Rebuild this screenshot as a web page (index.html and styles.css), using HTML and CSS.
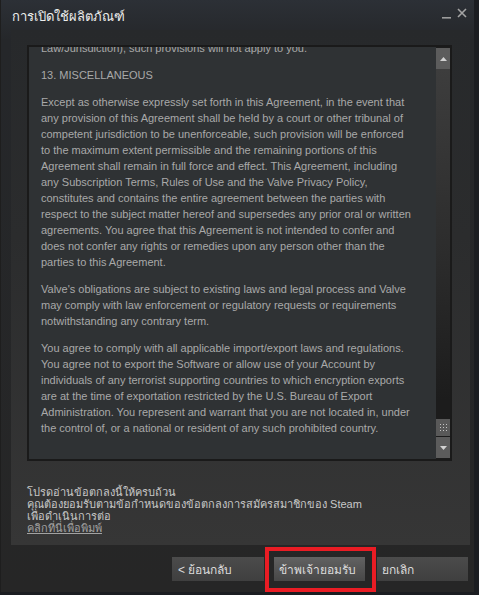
FILE: index.html
```html
<!DOCTYPE html>
<html lang="th">
<head>
  <meta charset="UTF-8">
  <meta name="viewport" content="width=device-width, initial-scale=1.0">
  <title>การเปิดใช้ผลิตภัณฑ์</title>
  <link rel="stylesheet" href="styles.css">
</head>
<body>
  <div class="window">
    <div class="titlebar">
      <span class="title">การเปิดใช้ผลิตภัณฑ์</span>
      <div class="window-controls">
        <svg class="minimize" width="9" height="3" viewBox="0 0 9 3"><rect x="0" y="1" width="9" height="1.6" fill="#9c9c9c"/></svg>
        <svg class="close" width="10" height="10" viewBox="0 0 10 10"><path d="M1 1 L9 9 M9 1 L1 9" stroke="#a4a4a4" stroke-width="1.6"/></svg>
      </div>
    </div>

    <div class="panel">
      <!-- Agreement text box -->
      <div class="agreement">
        <div class="agreement-text">
          <p class="scrolled">Law/Jurisdiction), such provisions will not apply to you.</p>
          <p>13. MISCELLANEOUS</p>
          <p>Except as otherwise expressly set forth in this Agreement, in the event that<br>
            any provision of this Agreement shall be held by a court or other tribunal of<br>
            competent jurisdiction to be unenforceable, such provision will be enforced<br>
            to the maximum extent permissible and the remaining portions of this<br>
            Agreement shall remain in full force and effect. This Agreement, including<br>
            any Subscription Terms, Rules of Use and the Valve Privacy Policy,<br>
            constitutes and contains the entire agreement between the parties with<br>
            respect to the subject matter hereof and supersedes any prior oral or written<br>
            agreements. You agree that this Agreement is not intended to confer and<br>
            does not confer any rights or remedies upon any person other than the<br>
            parties to this Agreement.</p>
          <p>Valve's obligations are subject to existing laws and legal process and Valve<br>
            may comply with law enforcement or regulatory requests or requirements<br>
            notwithstanding any contrary term.</p>
          <p>You agree to comply with all applicable import/export laws and regulations.<br>
            You agree not to export the Software or allow use of your Account by<br>
            individuals of any terrorist supporting countries to which encryption exports<br>
            are at the time of exportation restricted by the U.S. Bureau of Export<br>
            Administration. You represent and warrant that you are not located in, under<br>
            the control of, or a national or resident of any such prohibited country.</p>
        </div>
        <div class="scrollbar">
          <div class="scroll-btn">
            <svg width="7" height="4" viewBox="0 0 7 4"><path d="M0 4 L3.5 0 L7 4 Z" fill="#d2d2d2"/></svg>
          </div>
          <div class="scroll-track">
            <div class="scroll-thumb">
              <svg width="7" height="7" viewBox="0 0 7 7" fill="#c4c4c4">
                <rect x="0" y="0" width="1" height="1"/><rect x="3" y="0" width="1" height="1"/><rect x="6" y="0" width="1" height="1"/>
                <rect x="0" y="3" width="1" height="1"/><rect x="3" y="3" width="1" height="1"/><rect x="6" y="3" width="1" height="1"/>
                <rect x="0" y="6" width="1" height="1"/><rect x="3" y="6" width="1" height="1"/><rect x="6" y="6" width="1" height="1"/>
              </svg>
            </div>
          </div>
          <div class="scroll-btn">
            <svg width="7" height="4" viewBox="0 0 7 4"><path d="M0 0 L7 0 L3.5 4 Z" fill="#d2d2d2"/></svg>
          </div>
        </div>
      </div>

      <div class="notice">
        <p>โปรดอ่านข้อตกลงนี้ให้ครบถ้วน</p>
        <p>คุณต้องยอมรับตามข้อกำหนดของข้อตกลงการสมัครสมาชิกของ Steam</p>
        <p>เพื่อดำเนินการต่อ</p>
        <a href="#">คลิกที่นี่เพื่อพิมพ์</a>
      </div>
    </div>

    <div class="buttons">
      <button class="btn">&lt; ย้อนกลับ</button>
      <button class="btn btn-accept highlight">ข้าพเจ้ายอมรับ</button>
      <button class="btn btn-cancel">ยกเลิก</button>
    </div>
  </div>
</body>
</html>
```

FILE: styles.css
```css
body {
  margin: 0;
  padding: 0;
  background: #1b1d21;
  font-family: "Liberation Sans", Arial, sans-serif;
  width: 479px;
  height: 595px;
  overflow: hidden;
}

.window {
  width: 474px;
  height: 592px;
  background: linear-gradient(#2c3036 0, #25272a 40px, #262626 100%);
  border-left: 1px solid #1e1e1e;
  box-sizing: border-box;
  display: flex;
  flex-direction: column;
}

.titlebar {
  height: 30px;
  display: flex;
  align-items: center;
  justify-content: space-between;
  padding: 0 7px 0 11px;
  flex-shrink: 0;
}

.title {
  color: #ececec;
  font-size: 13px;
  margin-top: 2px;
}

.window-controls {
  display: flex;
  align-items: flex-start;
  gap: 6px;
  margin-top: -4px;
}

.minimize {
  margin-top: 8px;
}

.panel {
  margin-left: 10px;
  width: 459px;
  height: 515px;
  box-sizing: border-box;
  padding: 15px 18px 0 16px;
  background: linear-gradient(#27292b, #2b2c2d 40%, #363636 100%);
  flex-shrink: 0;
}

.agreement {
  height: 416px;
  box-sizing: border-box;
  border: 2px solid #1a1a1a;
  background: #2f3234;
  display: flex;
}

.agreement-text {
  flex: 1;
  overflow: hidden;
  padding: 0 12px;
  color: #a9a9a9;
  font-size: 11px;
  line-height: 16px;
  white-space: nowrap;
}

.agreement-text p {
  margin: 0 0 11px;
}

.agreement-text .scrolled {
  margin-top: -7px;
}

.scrollbar {
  width: 14px;
  padding: 1px 0;
  display: flex;
  flex-direction: column;
  background: #1c1c1c;
}

.scroll-btn {
  height: 21px;
  background: #5c5c5c;
  display: flex;
  align-items: center;
  justify-content: center;
  flex-shrink: 0;
}

.scroll-track {
  flex: 1;
  display: flex;
  flex-direction: column;
  justify-content: flex-end;
  padding-bottom: 1px;
  background: linear-gradient(#3d3d3d, #2c2c2c 50%, #1c1c1c 90%);
}

.scroll-thumb {
  height: 17px;
  background: #595959;
  display: flex;
  align-items: center;
  justify-content: center;
}

.notice {
  margin-top: 25px;
  color: #c8c8c8;
  font-size: 11px;
  line-height: 12px;
}

.notice p {
  margin: 0;
}

.notice a {
  color: #a2a2a2;
  text-decoration: underline;
}

.buttons {
  display: flex;
  justify-content: flex-end;
  padding: 12px 6px 0 0;
}

.btn {
  width: 92px;
  height: 24px;
  border: none;
  padding: 0 0 0 6px;
  text-align: left;
  font-family: "Liberation Sans", Arial, sans-serif;
  font-size: 12px;
  color: #dcdcdc;
  background: linear-gradient(#4b4b4b, #3f3f3f);
  cursor: pointer;
}

.btn-accept {
  width: 91px;
  margin-left: 10px;
  padding-left: 5px;
  background: linear-gradient(#626262, #474747);
}

.btn-cancel {
  width: 91px;
  margin-left: 12px;
  padding-left: 5px;
}

.highlight {
  position: relative;
}

.highlight::after {
  content: "";
  position: absolute;
  top: -10px;
  bottom: -11px;
  left: -9px;
  right: -11px;
  border: 4px solid #ea1c24;
}
```
